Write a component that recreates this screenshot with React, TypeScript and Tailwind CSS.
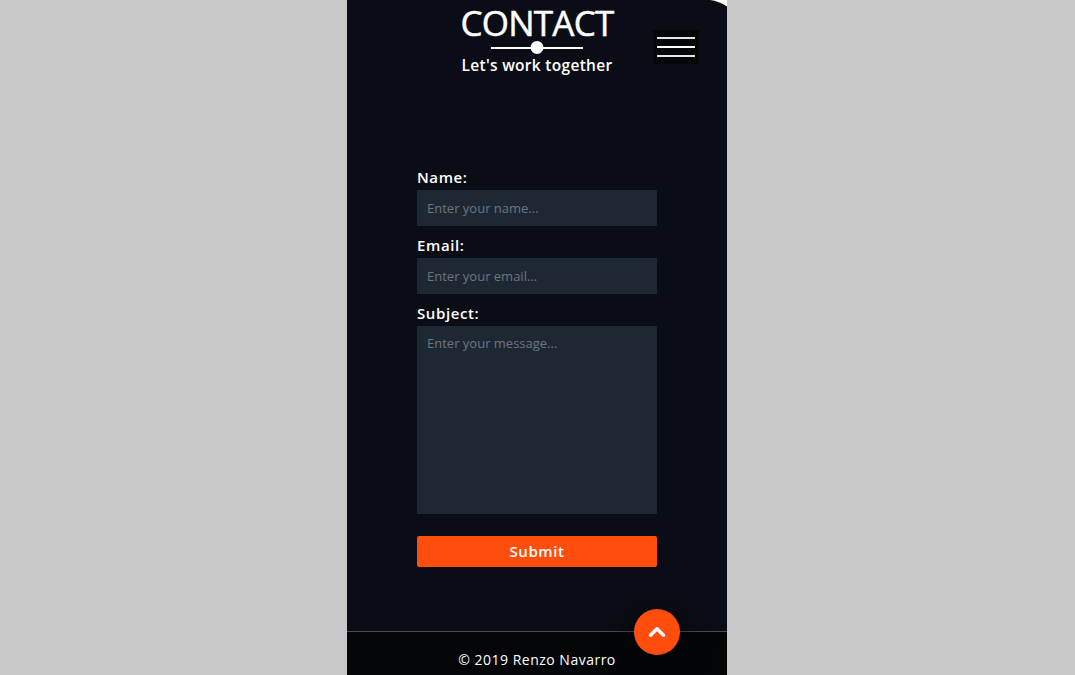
import { ChevronUp } from 'lucide-react';

const font = { fontFamily: '"Open Sans", "Liberation Sans", sans-serif' };

function Field({ label, placeholder }: { label: string; placeholder: string }) {
  return (
    <div className="flex flex-col">
      <label className="text-[15px] font-semibold tracking-[0.6px] text-white leading-[20px] mb-[3px]">{label}</label>
      <input
        placeholder={placeholder}
        className="h-[36px] w-full bg-[#1e2833] px-[10px] text-[13px] text-white placeholder:text-[#6c7581] outline-none"
      />
    </div>
  );
}

export default function App() {
  return (
    <div className="min-h-[675px] w-full bg-[#c8c8c8]" style={font}>
      <div className="relative ml-[347px] w-[380px] h-[675px] bg-[#0a0d15] flex flex-col overflow-hidden">
        {/* top-right corner curl */}
        <svg className="absolute right-0 top-0" width="17" height="7" viewBox="0 0 17 7">
          <path d="M0 0 H17 V6.5 Q9 1 0 0 Z" fill="#ffffff" />
        </svg>

        {/* Header */}
        <header className="relative flex justify-center pt-[3px]">
          <div className="flex flex-col items-center">
            <h1 className="text-[35px] leading-[40px] font-normal text-white tracking-[-0.8px] [-webkit-text-stroke:0.5px_white]">CONTACT</h1>
            <div className="relative mt-[-2px] h-[13px] w-[92px] flex items-center">
              <div className="h-[2px] w-full bg-white" />
              <div className="absolute left-1/2 top-0 h-[13px] w-[13px] -translate-x-1/2 rounded-full bg-white" />
            </div>
            <p className="mt-[1px] text-[15.5px] font-semibold tracking-[0.3px] text-white leading-[20px]">Let's work together</p>
          </div>
          <button className="absolute right-[28px] top-[30px] h-[34px] w-[46px] bg-[#050608] flex flex-col items-center justify-center gap-[7px]">
            <span className="block h-[2px] w-[38px] bg-[#e5e5e5]" />
            <span className="block h-[2px] w-[38px] bg-white" />
            <span className="block h-[2px] w-[38px] bg-[#e5e5e5]" />
          </button>
        </header>

        {/* Form */}
        <form className="ml-[70px] mt-[92px] w-[240px] flex flex-col gap-[9px]">
          <Field label="Name:" placeholder="Enter your name..." />
          <Field label="Email:" placeholder="Enter your email..." />
          <div className="flex flex-col">
            <label className="text-[15px] font-semibold tracking-[0.6px] text-white leading-[20px] mb-[3px]">Subject:</label>
            <textarea
              placeholder="Enter your message..."
              className="h-[188px] w-full resize-none bg-[#1e2833] px-[10px] py-[8px] text-[13px] text-white placeholder:text-[#6c7581] outline-none"
            />
          </div>
          <button
            type="button"
            className="mt-[13px] h-[31px] w-full rounded-[2px] bg-[#ff4d0d] text-[15px] font-semibold tracking-[0.6px] text-white"
          >
            Submit
          </button>
        </form>

        {/* Footer */}
        <footer className="mt-auto h-[44px] border-t border-[#4a4c50] bg-[#040507] flex items-end justify-center pb-[5px]">
          <p className="text-[14px] tracking-[0.5px] text-white leading-[20px]">© 2019 Renzo Navarro</p>
        </footer>

        <button className="absolute left-[287px] top-[609px] h-[46px] w-[46px] rounded-full bg-[#ff4d0d] flex items-center justify-center shadow-[0_0_24px_8px_rgba(0,0,0,0.35)]">
          <ChevronUp className="text-white" size={26} strokeWidth={3.2} />
        </button>
      </div>
    </div>
  );
}
